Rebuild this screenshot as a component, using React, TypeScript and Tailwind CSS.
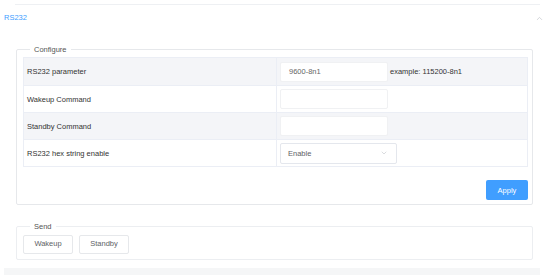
import { ChevronDown, ChevronUp } from "lucide-react";

const rows = [
  { label: "RS232 parameter", kind: "input", value: "9600-8n1", hint: "example: 115200-8n1" },
  { label: "Wakeup Command", kind: "input", value: "" },
  { label: "Standby Command", kind: "input", value: "" },
  { label: "RS232 hex string enable", kind: "select", value: "Enable" },
];

export default function App() {
  return (
    <div className="w-[550px] h-[275px] bg-white overflow-hidden font-['Liberation_Sans',Arial,sans-serif] text-[7.5px] text-[#333]">
      <div className="ml-[15px] mr-[10px] mt-[4px] border-t border-[#eef0f3]" />
      <div className="flex items-center justify-between h-[26px] pl-[4px] pr-[6px]">
        <span className="text-[#409eff] text-[7.5px]">RS232</span>
        <ChevronUp className="w-[9px] h-[9px] text-[#b4b8bf]" strokeWidth={1.5} />
      </div>

      <div className="pl-[16px] pr-[17px] pt-[13px]">
        <fieldset className="border border-[#e6e8eb] rounded-[2px] pl-[6px] pr-[4px] pb-[4px]">
          <legend className="ml-[7px] px-[4px] text-[7.5px] text-[#555]">Configure</legend>
          <div className="mt-[2px] border border-[#ebeef5]">
            {rows.map((r, i) => (
              <div
                key={r.label}
                className={`flex h-[27px] ${i > 0 ? "border-t border-[#ebeef5]" : ""} ${
                  i % 2 === 0 ? "bg-[#f4f5f8]" : "bg-white"
                }`}
              >
                <div className="w-[253px] flex items-center pl-[3px] text-[#333] border-r border-[#ebeef5]">
                  {r.label}
                </div>
                <div className="flex-1 flex items-center pl-[3px]">
                  {r.kind === "input" ? (
                    <div className="w-[108px] h-[20px] bg-white border border-[#f0f1f3] rounded-[2px] flex items-center pl-[8px] text-[#666]">
                      {r.value}
                    </div>
                  ) : (
                    <div className="w-[117px] h-[21px] bg-white border border-[#e4e7ed] rounded-[2px] flex items-center justify-between pl-[7px] pr-[8px] text-[#606266]">
                      <span>{r.value}</span>
                      <ChevronDown className="w-[8px] h-[8px] text-[#b4b8bf]" strokeWidth={1.5} />
                    </div>
                  )}
                  {r.hint && <span className="ml-[2px] text-[#333]">{r.hint}</span>}
                </div>
              </div>
            ))}
          </div>
          <div className="flex justify-end mt-[13px]">
            <button className="w-[42px] h-[20px] bg-[#409eff] rounded-[2px] text-white text-[7.5px]">
              Apply
            </button>
          </div>
        </fieldset>

        <fieldset className="mt-[16px] border border-[#eceef1] rounded-[2px] pl-[6px] pb-[5px]">
          <legend className="ml-[7px] px-[4px] text-[7.5px] text-[#555]">Send</legend>
          <div className="flex gap-[6px] mt-[2px]">
            <button className="w-[50px] h-[19px] bg-white border border-[#e6e8eb] rounded-[2px] text-[#606266] text-[7.5px]">
              Wakeup
            </button>
            <button className="w-[50px] h-[19px] bg-white border border-[#e6e8eb] rounded-[2px] text-[#606266] text-[7.5px]">
              Standby
            </button>
          </div>
        </fieldset>
      </div>

      <div className="mt-[8px] ml-[4px] mr-[10px] h-[8px] bg-[#f5f6f7]" />
    </div>
  );
}
